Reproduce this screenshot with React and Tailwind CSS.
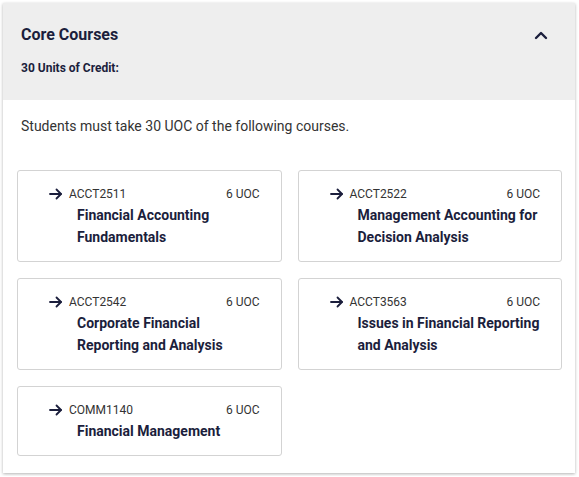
import React from 'react';

const courses = [
  { code: 'ACCT2511', title: 'Financial Accounting Fundamentals', uoc: 6 },
  { code: 'ACCT2522', title: 'Management Accounting for Decision Analysis', uoc: 6 },
  { code: 'ACCT2542', title: 'Corporate Financial Reporting and Analysis', uoc: 6 },
  { code: 'ACCT3563', title: 'Issues in Financial Reporting and Analysis', uoc: 6 },
  { code: 'COMM1140', title: 'Financial Management', uoc: 6 },
];

const ArrowRight = () => (
  <svg width="16" height="16" viewBox="0 0 16 16" fill="none" stroke="#1b1e3c" strokeWidth="1.8" strokeLinecap="round" strokeLinejoin="round">
    <path d="M2 8h11" />
    <path d="M8.5 3.5 13 8l-4.5 4.5" />
  </svg>
);

const CourseCard = ({ course }) => (
  <div className="border border-[#d3d3d3] rounded-[3px] bg-white pt-[13px] pb-[13px] pl-[30px] pr-[21px]">
    <div className="flex items-center h-[20px] text-[12px] text-[#333]">
      <ArrowRight />
      <span className="ml-[5px] flex-1">{course.code}</span>
      <span>{course.uoc} UOC</span>
    </div>
    <div className="ml-[29px] text-[14px] leading-[22px] font-bold text-[#1b1e3c]">{course.title}</div>
  </div>
);

const App = () => {
  return (
    <div className="pt-[3px] pl-[3px] pr-[4px] pb-[3px] bg-white" style={{ fontFamily: 'Roboto, "Liberation Sans", sans-serif' }}>
      <div className="bg-white shadow-[0_1px_3px_rgba(0,0,0,0.3)]">
        <div className="bg-[#eeeeee] pt-[20px] pb-[24px] pl-[18px] pr-[22px]">
          <div className="flex items-center justify-between h-[24px]">
            <h2 className="text-[16px] leading-[24px] font-bold text-[#1b1e3c]">Core Courses</h2>
            <svg width="24" height="24" viewBox="0 0 24 24" fill="none" stroke="#1b1e3c" strokeWidth="2.4" strokeLinecap="round" strokeLinejoin="round">
              <path d="M7 15l5-5 5 5" />
            </svg>
          </div>
          <div className="mt-[13px] text-[12px] leading-[16px] font-bold text-[#1b1e3c]">30 Units of Credit:</div>
        </div>
        <div className="pt-[16px] pb-[17px] pl-[14px] pr-[13px]">
          <p className="pl-[4px] text-[14px] leading-[20px] text-[#333]">Students must take 30 UOC of the following courses.</p>
          <div className="mt-[34px] grid grid-cols-2 gap-x-[16px] gap-y-[16px]">
            {courses.map((c) => (
              <CourseCard key={c.code} course={c} />
            ))}
          </div>
        </div>
      </div>
    </div>
  );
};

export default App;
